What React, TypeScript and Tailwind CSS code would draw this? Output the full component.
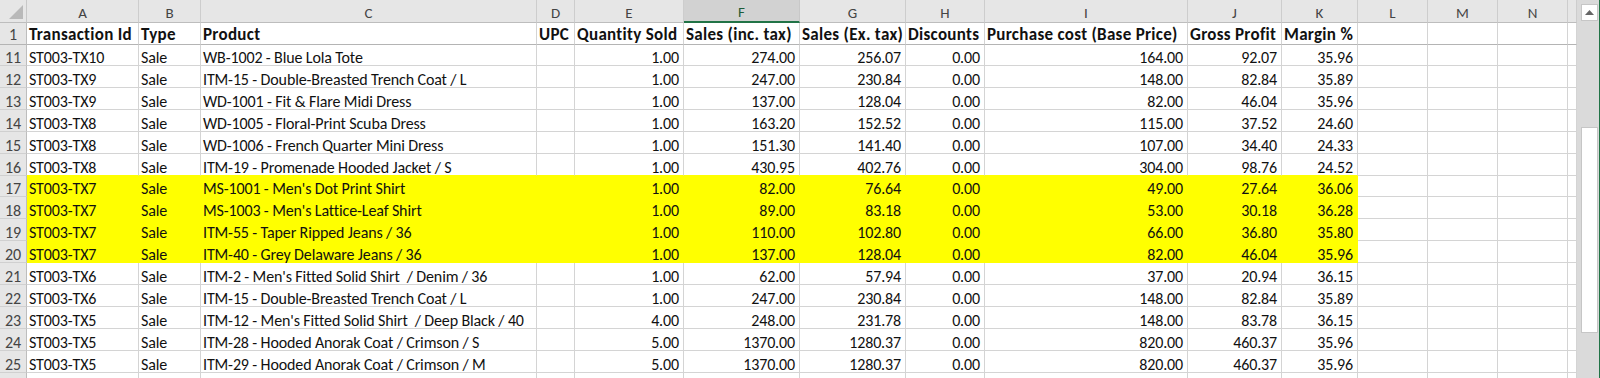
import React from "react";

const W = [
  "w-[27px]",
  "w-[112px]",
  "w-[62px]",
  "w-[336px]",
  "w-[38px]",
  "w-[109px]",
  "w-[116px]",
  "w-[106px]",
  "w-[79px]",
  "w-[203px]",
  "w-[94px]",
  "w-[76px]",
  "w-[70px]",
  "w-[70px]",
  "w-[70px]",
  "w-[9px]",
];

const LETTERS = ["A", "B", "C", "D", "E", "F", "G", "H", "I", "J", "K", "L", "M", "N", ""];

const HEADERS = [
  "Transaction Id",
  "Type",
  "Product",
  "UPC",
  "Quantity Sold",
  "Sales (inc. tax)",
  "Sales (Ex. tax)",
  "Discounts",
  "Purchase cost (Base Price)",
  "Gross Profit",
  "Margin %",
];

type Row = { n: string; h: string; yellow?: boolean; cells: string[] };

const ROWS: Row[] = [
  { n: "11", h: "h-[21px]", cells: ["ST003-TX10", "Sale", "WB-1002 - Blue Lola Tote", "", "1.00", "274.00", "256.07", "0.00", "164.00", "92.07", "35.96"] },
  { n: "12", h: "h-[22px]", cells: ["ST003-TX9", "Sale", "ITM-15 - Double-Breasted Trench Coat / L", "", "1.00", "247.00", "230.84", "0.00", "148.00", "82.84", "35.89"] },
  { n: "13", h: "h-[22px]", cells: ["ST003-TX9", "Sale", "WD-1001 - Fit & Flare Midi Dress", "", "1.00", "137.00", "128.04", "0.00", "82.00", "46.04", "35.96"] },
  { n: "14", h: "h-[22px]", cells: ["ST003-TX8", "Sale", "WD-1005 - Floral-Print Scuba Dress", "", "1.00", "163.20", "152.52", "0.00", "115.00", "37.52", "24.60"] },
  { n: "15", h: "h-[22px]", cells: ["ST003-TX8", "Sale", "WD-1006 - French Quarter Mini Dress", "", "1.00", "151.30", "141.40", "0.00", "107.00", "34.40", "24.33"] },
  { n: "16", h: "h-[22px]", cells: ["ST003-TX8", "Sale", "ITM-19 - Promenade Hooded Jacket / S", "", "1.00", "430.95", "402.76", "0.00", "304.00", "98.76", "24.52"] },
  { n: "17", h: "h-[21px]", yellow: true, cells: ["ST003-TX7", "Sale", "MS-1001 - Men's Dot Print Shirt", "", "1.00", "82.00", "76.64", "0.00", "49.00", "27.64", "36.06"] },
  { n: "18", h: "h-[22px]", yellow: true, cells: ["ST003-TX7", "Sale", "MS-1003 - Men's Lattice-Leaf Shirt", "", "1.00", "89.00", "83.18", "0.00", "53.00", "30.18", "36.28"] },
  { n: "19", h: "h-[22px]", yellow: true, cells: ["ST003-TX7", "Sale", "ITM-55 - Taper Ripped Jeans / 36", "", "1.00", "110.00", "102.80", "0.00", "66.00", "36.80", "35.80"] },
  { n: "20", h: "h-[22px]", yellow: true, cells: ["ST003-TX7", "Sale", "ITM-40 - Grey Delaware Jeans / 36", "", "1.00", "137.00", "128.04", "0.00", "82.00", "46.04", "35.96"] },
  { n: "21", h: "h-[22px]", cells: ["ST003-TX6", "Sale", "ITM-2 - Men's Fitted Solid Shirt  / Denim / 36", "", "1.00", "62.00", "57.94", "0.00", "37.00", "20.94", "36.15"] },
  { n: "22", h: "h-[22px]", cells: ["ST003-TX6", "Sale", "ITM-15 - Double-Breasted Trench Coat / L", "", "1.00", "247.00", "230.84", "0.00", "148.00", "82.84", "35.89"] },
  { n: "23", h: "h-[22px]", cells: ["ST003-TX5", "Sale", "ITM-12 - Men's Fitted Solid Shirt  / Deep Black / 40", "", "4.00", "248.00", "231.78", "0.00", "148.00", "83.78", "36.15"] },
  { n: "24", h: "h-[22px]", cells: ["ST003-TX5", "Sale", "ITM-28 - Hooded Anorak Coat / Crimson / S", "", "5.00", "1370.00", "1280.37", "0.00", "820.00", "460.37", "35.96"] },
  { n: "25", h: "h-[22px]", cells: ["ST003-TX5", "Sale", "ITM-29 - Hooded Anorak Coat / Crimson / M", "", "5.00", "1370.00", "1280.37", "0.00", "820.00", "460.37", "35.96"] },
  { n: "", h: "h-[22px]", cells: ["", "", "", "", "", "", "", "", "", "", ""] },
];

const TEXT_NORMAL = "text-[16px] leading-[12px] tracking-[-0.13px] text-[#111111]";
const TEXT_BOLD = "text-[17px] leading-[16px] font-bold tracking-[0.3px] text-[#111111]";

function RowNumber({ n, h, header }: { n: string; h: string; header?: boolean }) {
  return (
    <div
      className={`${W[0]} ${h} shrink-0 flex items-end justify-center bg-[#e6e6e6] border-r border-r-[#bdbdbd] border-b ${
        header ? "border-b-[#b4b4b4]" : "border-b-[#d0d0d0]"
      } pb-[1px]`}
    >
      <span className={`text-[16px] ${header ? "leading-[16px]" : "leading-[12px]"} text-[#444444] tracking-[-0.13px]`}>{n}</span>
    </div>
  );
}

function Cell({
  i,
  h,
  text,
  bold,
  yellow,
  bottomYellow,
  rightYellow,
  freeze,
}: {
  i: number;
  h: string;
  text: string;
  bold?: boolean;
  yellow?: boolean;
  bottomYellow?: boolean;
  rightYellow?: boolean;
  freeze?: boolean;
}) {
  const numeric = !bold && i >= 4 && i <= 10;
  const bg = yellow ? "bg-[#ffff00]" : "bg-white";
  const br = rightYellow ? "border-r-[#ffff00]" : "border-r-[#d4d4d4]";
  const bb = freeze ? "border-b-[#b4b4b4]" : bottomYellow ? "border-b-[#ffff00]" : "border-b-[#d4d4d4]";
  return (
    <div
      className={`${W[i + 1]} ${h} shrink-0 flex items-end ${numeric ? "justify-end pr-[4px]" : "justify-start pl-[2px]"} ${bg} border-r border-b ${br} ${bb} pb-[1px]`}
    >
      <span className={`whitespace-pre ${bold ? TEXT_BOLD : TEXT_NORMAL}`}>{text}</span>
    </div>
  );
}

function CornerTriangle() {
  return (
    <div className={`${W[0]} h-[23px] shrink-0 flex items-end justify-end bg-[#e6e6e6] border-r border-b border-r-[#c8c8c8] border-b-[#bdbdbd] pr-[3px] pb-[3px]`}>
      <svg width="14" height="14" viewBox="0 0 14 14">
        <polygon points="14,0 14,14 0,14" fill="#b9b9b9" />
      </svg>
    </div>
  );
}

function ColumnHeaders() {
  return (
    <div className="flex">
      <CornerTriangle />
      {LETTERS.map((l, idx) => {
        const selected = l === "F";
        return (
          <div
            key={idx}
            className={`${W[idx + 1]} h-[23px] shrink-0 flex items-end justify-center pb-[1px] border-r ${
              selected ? "bg-[#d2d2d2] border-b-2 border-b-[#217346] border-r-[#c8c8c8]" : "bg-[#e6e6e6] border-b border-b-[#bdbdbd] border-r-[#cdcdcd]"
            }`}
          >
            <span className={`text-[15px] leading-[16px] ${selected ? "text-[#1e5c3a]" : "text-[#444444]"}`}>{l}</span>
          </div>
        );
      })}
    </div>
  );
}

function HeaderRow() {
  return (
    <div className="flex">
      <RowNumber n="1" h="h-[22px]" header />
      {Array.from({ length: 15 }).map((_, i) => (
        <Cell key={i} i={i} h="h-[22px]" text={HEADERS[i] ?? ""} bold freeze />
      ))}
    </div>
  );
}

function DataRows() {
  return (
    <>
      {ROWS.map((r, ri) => {
        const next = ROWS[ri + 1];
        return (
          <div key={ri} className="flex">
            <RowNumber n={r.n} h={r.h} />
            {Array.from({ length: 15 }).map((_, i) => {
              const inFill = i <= 10;
              const yellow = !!r.yellow && inFill;
              const bottomYellow = inFill && (!!r.yellow || !!next?.yellow);
              return (
                <Cell
                  key={i}
                  i={i}
                  h={r.h}
                  text={r.cells[i] ?? ""}
                  yellow={yellow}
                  bottomYellow={bottomYellow}
                  rightYellow={yellow}
                />
              );
            })}
          </div>
        );
      })}
    </>
  );
}

function Scrollbar() {
  return (
    <div className="w-[23px] h-[378px] shrink-0 flex bg-[#dadada]">
      <div className="flex-1 flex flex-col items-center pt-[4px] pl-[2px]">
        <div className="w-[17px] h-[17px] flex items-center justify-center bg-white border border-[#c6c6c6]">
          <svg width="9" height="5" viewBox="0 0 9 5">
            <polygon points="4.5,0 9,5 0,5" fill="#666666" />
          </svg>
        </div>
        <div className="w-[17px] h-[206px] mt-[106px] bg-white border border-[#c6c6c6]" />
      </div>
      <div className="w-[1px] h-full bg-[#217346]" />
    </div>
  );
}

export default function App() {
  return (
    <div className="w-[1600px] h-[378px] overflow-hidden flex bg-white font-[Carlito,Calibri,sans-serif]">
      <div className="w-[1577px] h-[378px] shrink-0 overflow-hidden flex flex-col">
        <ColumnHeaders />
        <HeaderRow />
        <DataRows />
      </div>
      <Scrollbar />
    </div>
  );
}
